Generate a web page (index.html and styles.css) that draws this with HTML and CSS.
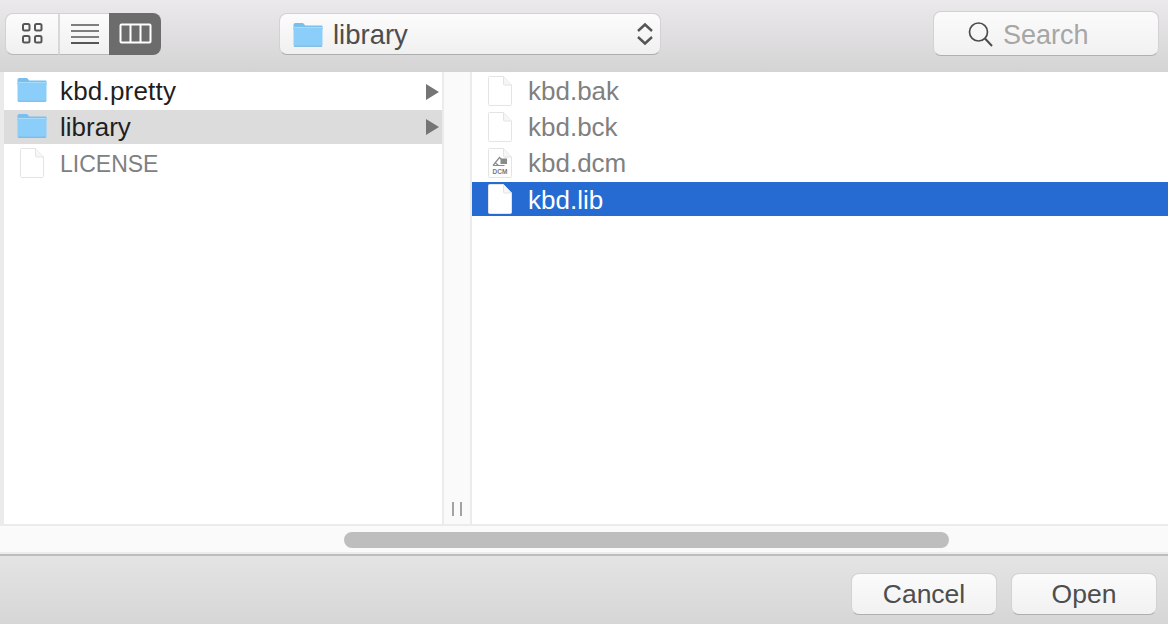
FILE: index.html
```html
<!DOCTYPE html>
<html lang="en">
<head>
<meta charset="utf-8">
<title>Open</title>
<link rel="stylesheet" href="styles.css">
</head>
<body>
<svg class="defs" width="0" height="0" aria-hidden="true">
  <defs>
    <symbol id="folder" viewBox="0 0 30 25">
      <path d="M.5 3C.5 1.700 1.200 1 2.500 1h6.500c1 0 1.500.5 2.200 1.300l1 1.200H28.500c.7 0 1 .4 1 1v3H.5z" fill="#78bfee"/>
      <rect x=".5" y="5" width="29" height="19.500" rx="1" fill="#8ccefa"/>
      <path d="M1 5.400h28" stroke="#b4e0fb" stroke-width=".8"/>
      <path d="M1 24.300h28" stroke="#6aa9d6" stroke-width=".8"/>
    </symbol>
    <symbol id="doc" viewBox="0 0 26 32">
      <path d="M1.500 2.500c0-.6.4-1 1-1h14l8 8.500V29.500c0 .6-.4 1-1 1h-21c-.6 0-1-.4-1-1z" fill="#fff" stroke="#e4e4e4"/>
      <path d="M16.500 1.500V9c0 .6.400 1 1 1h7" fill="#f6f6f6" stroke="#e4e4e4"/>
    </symbol>
  </defs>
</svg>
<main class="dialog">
  <header class="toolbar">
    <div class="segmented">
      <button class="seg seg-first" aria-label="Icons">
        <svg width="24" height="24" viewBox="0 0 24 24" fill="none" stroke="#565656" stroke-width="2"><rect x="3" y="2" width="6.500" height="6.500" rx="1.500"/><rect x="15" y="2" width="6.500" height="6.500" rx="1.500"/><rect x="3" y="14" width="6.500" height="6.500" rx="1.500"/><rect x="15" y="14" width="6.500" height="6.500" rx="1.500"/></svg>
      </button>
      <button class="seg seg-mid" aria-label="List">
        <svg width="30" height="22" viewBox="0 0 30 22" stroke="#555"><path d="M1 2h28M1 8h28M1 14h28" stroke-width="1.500"/><path d="M1 20h28" stroke-width="2"/></svg>
      </button>
      <button class="seg seg-on" aria-label="Columns">
        <svg width="33" height="22" viewBox="0 0 33 22" fill="none" stroke="#fff" stroke-width="2"><rect x="1.500" y="1.500" width="30" height="18" rx="1"/><path d="M11.500 1.500v18M21.500 1.500v18"/></svg>
      </button>
    </div>
    <div class="path-select">
      <svg class="path-icon" width="30" height="25"><use href="#folder"/></svg>
      <span class="path-label">library</span>
      <svg class="updown" width="18" height="26" viewBox="0 0 18 26" fill="none" stroke="#555" stroke-width="2.400"><path d="M2 10l7-6.500 7 6.500M2 16l7 6.500 7-6.500"/></svg>
    </div>
    <div class="search">
      <svg width="26" height="26" viewBox="0 0 26 26" fill="none" stroke="#4c4c4c" stroke-width="1.700"><circle cx="10.500" cy="11" r="9"/><path d="M17 17.500l7 7.500" stroke-width="2"/></svg>
      <span class="search-text">Search</span>
    </div>
  </header>

  <section class="browser">
    <div class="column col-left">
      <div class="row row-folder"><svg class="ico-folder" width="30" height="25"><use href="#folder"/></svg><span class="name wide">kbd.pretty</span><span class="arrow"></span></div>
      <div class="row row-folder row-parent"><svg class="ico-folder" width="30" height="25"><use href="#folder"/></svg><span class="name">library</span><span class="arrow"></span></div>
      <div class="row row-license"><svg class="ico-doc" width="26" height="32"><use href="#doc"/></svg><span class="name dim">LICENSE</span></div>
    </div>
    <div class="gutter"><span class="grip"></span></div>
    <div class="column col-right">
      <div class="row"><svg class="ico-doc" width="26" height="32"><use href="#doc"/></svg><span class="name dim">kbd.bak</span></div>
      <div class="row"><svg class="ico-doc" width="26" height="32"><use href="#doc"/></svg><span class="name dim">kbd.bck</span></div>
      <div class="row">
        <svg class="ico-doc" width="26" height="32" viewBox="0 0 26 32"><use href="#doc"/><path d="M6 18.500l6.500-8 3.500 3.500M6 18.500h11.500M8.500 16l3 2.500" fill="none" stroke="#8a8a8a" stroke-width="1.200"/><rect x="13.500" y="11.500" width="6.500" height="5.500" fill="#8a8a8a"/><text x="13" y="27" class="dcm">DCM</text></svg>
        <span class="name dim">kbd.dcm</span>
      </div>
      <div class="row row-selected"><svg class="ico-doc" width="26" height="32"><use href="#doc"/></svg><span class="name">kbd.lib</span></div>
    </div>
  </section>

  <div class="hscroll"><div class="thumb"></div></div>

  <footer class="footer">
    <button class="btn">Cancel</button>
    <button class="btn">Open</button>
  </footer>
</main>
</body>
</html>
```
FILE: styles.css
```css
* { box-sizing: border-box; }
html, body { margin: 0; padding: 0; }
body {
  width: 1168px;
  height: 624px;
  overflow: hidden;
  font-family: "Liberation Sans", Arial, sans-serif;
}
.defs { position: absolute; }
.dialog { display: flex; flex-direction: column; width: 1168px; height: 624px; background: #fff; }

.toolbar {
  height: 72px;
  flex: none;
  display: flex;
  align-items: flex-start;
  background: linear-gradient(#ebe9eb, #d5d4d5);
  padding: 13px 9px 0 5px;
}
.segmented { display: flex; width: 156px; height: 42px; border-radius: 8px; }
button { font-family: inherit; padding: 0; margin: 0; }
.seg {
  height: 42px;
  display: flex;
  align-items: center;
  justify-content: center;
  background: linear-gradient(#fcfcfc, #f0f0f0);
  border: 0;
  border-top: 1px solid #d2d2d2;
  border-bottom: 1px solid #b8b8b8;
}
.seg-first { width: 53px; border-left: 1px solid #d2d2d2; border-radius: 8px 0 0 8px; }
.seg-mid { width: 51px; border-left: 2px solid #d8d8d8; }
.seg-on { width: 52px; background: #6c6c6c; border: 0; border-radius: 0 8px 8px 0; }

.path-select {
  width: 382px;
  height: 42px;
  margin-left: 118px;
  display: flex;
  align-items: center;
  padding: 0 6px 0 13px;
  border-radius: 8px;
  background: linear-gradient(#fcfcfc, #f0f0f0);
  border: 1px solid #d2d2d2;
  border-bottom-color: #adadad;
}
.path-label { margin: 2px 0 0 10px; font-size: 27.500px; color: #4d4d4d; flex: 1; }

.search {
  width: 226px;
  height: 45px;
  margin: -2px 0 0 auto;
  display: flex;
  align-items: center;
  padding-left: 34px;
  gap: 9px;
  border-radius: 8px;
  background: linear-gradient(#fbfbfb, #f1f1f1);
  border: 1px solid #d2d2d2;
  border-bottom-color: #b0b0b0;
}
.search-text { font-size: 27px; color: #a6a6a6; margin-top: 3px; }

.browser { height: 454px; flex: none; display: flex; border-left: 4px solid #ebebeb; border-bottom: 2px solid #ebebeb; }
.column { display: flex; flex-direction: column; padding-top: 2px; }
.col-left { width: 438px; flex: none; }
.col-right { flex: 1; }
.gutter {
  width: 30px;
  flex: none;
  display: flex;
  align-items: flex-end;
  justify-content: center;
  padding-bottom: 8px;
  background: #fafafa;
  border-left: 2px solid #ebebeb;
  border-right: 2px solid #ebebeb;
}
.grip { width: 10px; height: 14px; border-left: 2px solid #a3a3a3; border-right: 2px solid #a3a3a3; }

.row { height: 36px; display: flex; align-items: center; padding-left: 15px; position: relative; }
.row-folder { padding-left: 13px; }
.row-parent { height: 34px; margin: 0 0 2px; background: #dcdcdc; }
.row-selected { height: 34px; background: #266bd2; }
.ico-doc { flex: none; margin-top: -3px; }
.ico-folder { flex: none; margin-top: -5px; }
.row-parent .ico-folder { margin-top: -3px; }
.name { font-size: 26px; color: #1f1f1f; margin: -2px 0 0 15px; white-space: nowrap; }
.row-folder .name { margin-left: 13px; }
.row-parent .name { margin-top: 0; }
.wide { letter-spacing: .2px; }
.dim { color: #808080; }
.row-license .name { font-size: 23px; margin-top: 0; }
.row-selected .name { color: #fff; margin-top: 2px; }
.row-selected .ico-doc { margin-top: -1px; }
.dcm { font: 700 6.500px "Liberation Sans", sans-serif; fill: #777; text-anchor: middle; }
.arrow {
  position: absolute;
  right: 3px;
  top: 50%;
  margin-top: -8px;
  width: 0;
  height: 0;
  border-left: 13px solid #757575;
  border-top: 8px solid transparent;
  border-bottom: 8px solid transparent;
}

.hscroll { height: 30px; flex: none; display: flex; align-items: center; padding-left: 344px; background: #fafafa; border-bottom: 2px solid #bdbdbd; box-shadow: inset 0 -2px 0 #ececec; }
.thumb { width: 605px; height: 16px; border-radius: 8px; background: #bebebe; }

.footer {
  flex: 1;
  display: flex;
  justify-content: flex-end;
  align-items: flex-start;
  gap: 14px;
  padding: 17px 11px 0 0;
  background: linear-gradient(#e4e4e4, #d6d6d6);
}
.btn {
  width: 146px;
  height: 42px;
  border-radius: 8px;
  background: linear-gradient(#fbfbfb, #f1f1f1);
  border: 1px solid #d2d2d2;
  border-bottom-color: #afafaf;
  font-size: 26.500px;
  color: #4d4d4d;
}
```
